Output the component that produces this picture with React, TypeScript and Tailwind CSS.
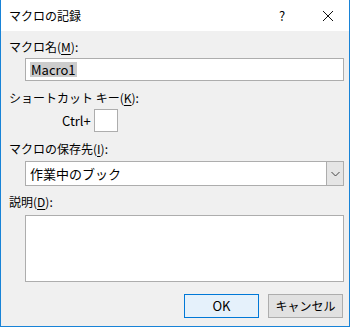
const font = { fontFamily: '"Noto Sans CJK JP", "Noto Sans", sans-serif' };

function Label({ text, hot, className = "" }: { text: string; hot: string; className?: string }) {
  return (
    <div className={`h-[16px] leading-[16px] text-[12px] text-black pl-[8px] ${className}`}>
      {text}(<span className="underline underline-offset-2">{hot}</span>):
    </div>
  );
}

export default function App() {
  return (
    <div
      className="w-[350px] h-[327px] flex flex-col bg-[#f0f0f0] border-x border-b border-[#1883d7] overflow-hidden"
      style={font}
    >
      <div className="h-[31px] shrink-0 bg-white flex items-center text-[12px] text-black">
        <span className="pl-[8px] flex-1">マクロの記録</span>
        <span className="w-[20px] text-center mr-[30px] text-[13px]">?</span>
        <svg width="12" height="12" viewBox="0 0 12 12" className="mr-[15px]">
          <path d="M1 1L11 11M11 1L1 11" stroke="#111" strokeWidth="1" />
        </svg>
      </div>

      <Label text="マクロ名" hot="M" className="mt-[8px]" />
      <div className="mt-[3px] ml-[24px] w-[319px] h-[23px] bg-white border border-[#adadad] flex items-center pl-[4px]">
        <span className="bg-[#cccccc] text-[13px] leading-[15px] px-[1px] text-black">Macro1</span>
      </div>

      <Label text="ショートカット キー" hot="K" className="mt-[9px]" />
      <div className="mt-[3px] flex items-center">
        <span className="ml-[61px] text-[13px] text-black">Ctrl+</span>
        <div className="ml-[3px] w-[24px] h-[23px] bg-white border border-[#adadad]" />
      </div>

      <Label text="マクロの保存先" hot="I" className="mt-[9px]" />
      <div className="mt-[4px] ml-[24px] w-[319px] h-[25px] bg-white border border-[#adadad] flex">
        <span className="flex-1 flex items-center pl-[4px] text-[13px] text-black">作業中のブック</span>
        <div className="w-[17px] bg-[#e5e5e5] border-l border-[#adadad] flex items-center justify-center">
          <svg width="9" height="6" viewBox="0 0 9 6">
            <path d="M0.5 1L4.5 5L8.5 1" stroke="#444" strokeWidth="1" fill="none" />
          </svg>
        </div>
      </div>

      <Label text="説明" hot="D" className="mt-[8px]" />
      <div className="mt-[5px] ml-[24px] w-[319px] h-[67px] bg-white border border-[#adadad]" />

      <div className="mt-[12px] flex justify-end gap-[9px] pr-[6px]">
        <div className="w-[75px] h-[24px] bg-[#e5f1fb] border border-[#0078d7] flex items-center justify-center text-[13px] text-black">
          OK
        </div>
        <div className="w-[75px] h-[24px] bg-[#e1e1e1] border border-[#adadad] flex items-center justify-center text-[12px] text-black">
          キャンセル
        </div>
      </div>
    </div>
  );
}
